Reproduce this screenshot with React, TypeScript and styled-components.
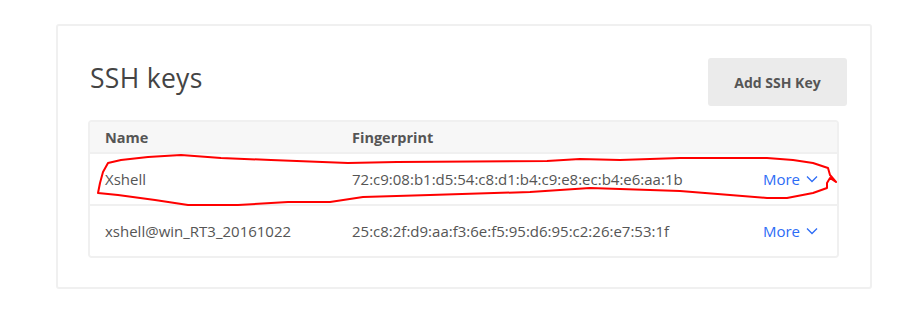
import React from "react";
import styled, { createGlobalStyle } from "styled-components";

const GlobalStyle = createGlobalStyle`
  html, body {
    margin: 0;
    padding: 0;
    background: #ffffff;
    font-family: "Open Sans", "Liberation Sans", sans-serif;
  }
`;

const Page = styled.div`
  position: relative;
  width: 917px;
  height: 314px;
  padding: 24px 45px 0 56px;
  box-sizing: border-box;
`;

const Card = styled.section`
  box-sizing: border-box;
  height: 265px;
  border: 2px solid #f0f0f0;
  border-radius: 3px;
  padding: 32px 23px 29px 30px;
  display: flex;
  flex-direction: column;
  gap: 14px;
`;

const CardHeader = styled.div`
  display: flex;
  align-items: center;
  justify-content: space-between;
`;

const Title = styled.h2`
  margin: 0 0 8px 2px;
  font-size: 26.5px;
  font-weight: 400;
  color: #444444;
  letter-spacing: 0.3px;
`;

const Button = styled.button`
  width: 139px;
  height: 48px;
  border: none;
  border-radius: 3px;
  background: #ebebeb;
  color: #555555;
  font-family: "Open Sans", "Liberation Sans", sans-serif;
  font-size: 14px;
  font-weight: 700;
  cursor: pointer;
`;

const Table = styled.div`
  margin-right: 8px;
  border: 2px solid #f0f0f0;
  border-radius: 4px;
  overflow: hidden;
`;

const Row = styled.div<{ $head?: boolean }>`
  display: grid;
  grid-template-columns: 247px 1fr auto;
  align-items: center;
  height: ${(p) => (p.$head ? "30px" : "50px")};
  padding: 0 19px 0 15px;
  background: ${(p) => (p.$head ? "#f7f7f7" : "#ffffff")};
  border-top: ${(p) => (p.$head ? "none" : "2px solid #f0f0f0")};
  color: #555555;
  font-size: ${(p) => (p.$head ? "14.5px" : "15px")};
  font-weight: ${(p) => (p.$head ? 700 : 400)};
`;

const More = styled.a`
  display: flex;
  align-items: center;
  gap: 6px;
  color: #2d6cf6;
  font-size: 15px;
  cursor: pointer;
`;

const Scribble = styled.svg`
  position: absolute;
  left: 0;
  top: 0;
  pointer-events: none;
`;

const keys = [
  { name: "Xshell", fp: "72:c9:08:b1:d5:54:c8:d1:b4:c9:e8:ec:b4:e6:aa:1b" },
  { name: "xshell@win_RT3_20161022", fp: "25:c8:2f:d9:aa:f3:6e:f5:95:d6:95:c2:26:e7:53:1f" },
];

const Chevron = () => (
  <svg width="12" height="8" viewBox="0 0 12 8">
    <polyline points="1,1.5 6,6.5 11,1.5" fill="none" stroke="#2d6cf6" strokeWidth="1.3" />
  </svg>
);

export default function App() {
  return (
    <>
      <GlobalStyle />
      <Page>
        <Card>
          <CardHeader>
            <Title>SSH keys</Title>
            <Button>Add SSH Key</Button>
          </CardHeader>
          <Table>
            <Row $head>
              <span>Name</span>
              <span>Fingerprint</span>
              <span />
            </Row>
            {keys.map((k) => (
              <Row key={k.name}>
                <span>{k.name}</span>
                <span>{k.fp}</span>
                <More>
                  More <Chevron />
                </More>
              </Row>
            ))}
          </Table>
        </Card>
        <Scribble width="917" height="314" viewBox="0 0 917 314">
          <path
            d="M98,193 L100,183 L103,172 L108,163 L121,160 L148,157 L181,155 L221,158 L271,160 L348,163 L397,162 L547,161 L580,159 L620,160 L680,158 L767,158 L793,160 L813,163 L828,168 L830,175 L836,182 L830,178 L827,183 L827,188 L813,193 L787,198 L767,198 L730,195 L680,191 L590,188 L530,192 L430,195 L363,197 L330,202 L288,202 L238,205 L188,205 L155,200 L118,195 Z"
            fill="none"
            stroke="#ff0000"
            strokeWidth="2"
            strokeLinejoin="round"
          />
        </Scribble>
      </Page>
    </>
  );
}
